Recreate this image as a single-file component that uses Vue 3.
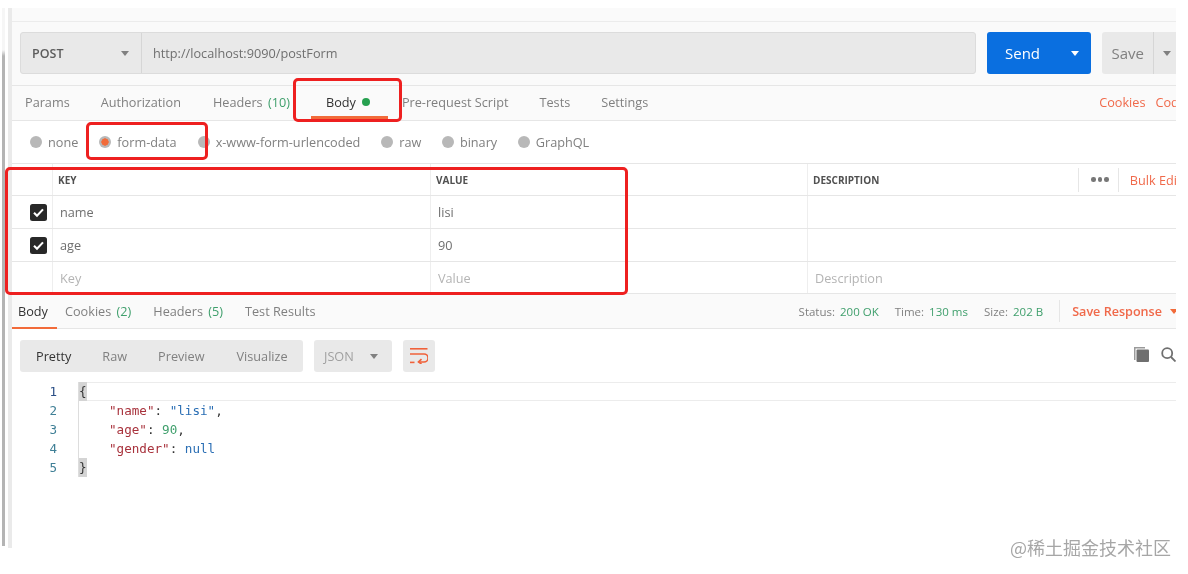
<script setup>
const bodyTypes = ['raw', 'binary', 'GraphQL']
const rows = [
  { k: 'name', v: 'lisi' },
  { k: 'age', v: '90' }
]
</script>

<template>
  <div class="page">
    <div class="strip"></div>
    <div class="app">
      <div class="topbar"></div>
      <div class="urlrow">
        <div class="urlbox">
          <div class="method"><span>POST</span><i class="caret"></i></div>
          <div class="url">http://localhost:9090/postForm</div>
        </div>
        <div class="send"><span>Send</span><i class="caret white"></i></div>
        <div class="save"><span>Save</span><div class="savecaret"><i class="caret"></i></div></div>
      </div>
      <div class="reqtabs">
        <span class="t1">Params</span>
        <span class="t2">Authorization</span>
        <span class="t3">Headers <em>(10)</em></span>
        <span class="t4">Body<b class="dot"></b></span>
        <span class="t5">Pre-request Script</span>
        <span class="t6">Tests</span>
        <span class="t7">Settings</span>
        <span class="links"><a>Cookies</a><a>Code</a></span>
      </div>
      <div class="radios">
        <span class="r r1"><i class="radio"></i>none</span>
        <span class="r r2"><i class="radio on"></i>form-data</span>
        <span class="r r3"><i class="radio"></i>x-www-form-urlencoded</span>
        <span class="r r4" v-for="b in bodyTypes" :key="b"><i class="radio"></i>{{ b }}</span>
      </div>
      <div class="table">
        <div class="tr th">
          <div class="c0"></div>
          <div class="c1">KEY</div>
          <div class="c2">VALUE</div>
          <div class="c3">
            <span>DESCRIPTION</span>
            <span class="tools">
              <span class="dots"><b></b><b></b><b></b></span>
              <a>Bulk Edit</a>
            </span>
          </div>
        </div>
        <div class="tr" v-for="r in rows" :key="r.k">
          <div class="c0">
            <svg class="check" viewBox="0 0 17 17" width="17" height="17">
              <rect width="17" height="17" rx="2.5" fill="#282828" />
              <path d="M4 8.8l3 3 6-6.4" fill="none" stroke="#fff" stroke-width="2.1" />
            </svg>
          </div>
          <div class="c1">{{ r.k }}</div>
          <div class="c2">{{ r.v }}</div>
          <div class="c3"></div>
        </div>
        <div class="tr ph last">
          <div class="c0"></div>
          <div class="c1">Key</div>
          <div class="c2">Value</div>
          <div class="c3">Description</div>
        </div>
      </div>
      <div class="restabs">
        <span class="rt active">Body</span>
        <span class="rt r-cookies">Cookies <em>(2)</em></span>
        <span class="rt r-headers">Headers <em>(5)</em></span>
        <span class="rt r-tests">Test Results</span>
        <span class="meta">
          <span>Status: <em>200 OK</em></span>
          <span>Time: <em>130 ms</em></span>
          <span>Size: <em>202 B</em></span>
          <span class="saveres">Save Response<i class="caret red"></i></span>
        </span>
      </div>
      <div class="toolbar">
        <div class="seg">
          <span class="cur">Pretty</span><span class="s-raw">Raw</span><span class="s-prev">Preview</span><span class="s-vis">Visualize</span>
        </div>
        <div class="json"><span>JSON</span><i class="caret"></i></div>
        <div class="wrap">
          <svg viewBox="0 0 18 16" width="18" height="16" fill="none" stroke="#f0613a" stroke-width="1.6">
            <path d="M0 .8h17.5" />
            <path d="M0 6h14a4 4 0 0 1 0 8H8.5" />
            <path d="M11.5 11.2L8.5 14l3 2" />
            <path d="M0 14.4h4.5" />
          </svg>
        </div>
        <div class="icons">
          <svg viewBox="0 0 15 15" width="15" height="15" fill="#6f6f6f">
            <path d="M0 0h11v1.5H1.5V13H0z" fill="#9a9a9a" />
            <rect x="2.5" y="2.5" width="12.5" height="12.5" rx="1" />
          </svg>
          <svg viewBox="0 0 15 15" width="15" height="15" fill="none" stroke="#6f6f6f" stroke-width="1.8">
            <circle cx="6.2" cy="6.2" r="5" />
            <path d="M10 10l4.5 4.5" />
          </svg>
        </div>
      </div>
      <div class="code">
        <div class="gutter"><div class="n1">1</div><div>2</div><div>3</div><div>4</div><div>5</div></div>
        <div class="lines">
          <div class="ln act"><span class="br">{</span></div>
          <div class="ln in"><span class="k">"name"</span>: <span class="s">"lisi"</span>,</div>
          <div class="ln in"><span class="k">"age"</span>: <span class="num">90</span>,</div>
          <div class="ln in"><span class="k">"gender"</span>: <span class="s">null</span></div>
          <div class="ln"><span class="br">}</span></div>
        </div>
      </div>
    </div>

    <div class="leftline"></div>
    <div class="mark m-body"></div>
    <div class="mark m-form"></div>
    <div class="mark m-table"></div>
    <div class="underline"></div>
    <div class="watermark">@稀土掘金技术社区</div>
  </div>
</template>

<style>
html, body { margin: 0; background: #fff; overflow: hidden; }
</style>

<style scoped>
.page {
  position: relative;
  width: 1188px;
  height: 574px;
  overflow: hidden;
  display: flex;
  background: #fff;
  font-family: "Open Sans", "Noto Sans", sans-serif;
  font-size: 12.7px;
  color: #808080;
  filter: blur(0.45px);
}
.strip {
  width: 3px;
  height: 538px;
  margin: 8px 0 0 2px;
  background: linear-gradient(#f6f6f6 0 42px, #b4b4b4 48px);
  flex: none;
}
.app {
  width: 1168px;
  height: 540px;
  margin: 8px 0 0 3px;
  box-sizing: border-box;
  overflow: hidden;
  flex: none;
}
.topbar { height: 13px; background: #fafafa; border-bottom: 1px solid #ececec; }
.urlrow {
  height: 64px;
  box-sizing: border-box;
  background: #fafafa;
  border-bottom: 1px solid #e6e6e6;
  display: flex;
  padding: 10px 0 0 12px;
}
.urlbox {
  width: 956px;
  height: 42px;
  box-sizing: border-box;
  background: #e9e9e9;
  border: 1px solid #dcdcdc;
  border-radius: 3px;
  display: flex;
  align-items: center;
  flex: none;
}
.method {
  width: 121px;
  height: 100%;
  border-right: 1px solid #d6d6d6;
  box-sizing: border-box;
  display: flex;
  align-items: center;
  justify-content: space-between;
  padding: 0 12px 0 11px;
  font-weight: 600;
  font-size: 12.5px;
  color: #5c5c5c;
}
.url { padding-left: 11px; font-size: 12.7px; color: #6f6f6f; }
.caret {
  display: inline-block;
  width: 0;
  height: 0;
  border-left: 4px solid transparent;
  border-right: 4px solid transparent;
  border-top: 5px solid #808080;
}
.caret.white { border-top-color: #fff; }
.caret.red { border-top-color: #f26b3a; margin-left: 8px; }
.send {
  width: 104px;
  height: 42px;
  margin-left: 11px;
  background: #0a6fe0;
  border-radius: 3px;
  color: #fff;
  font-size: 15px;
  font-weight: 500;
  display: flex;
  align-items: center;
  justify-content: space-between;
  box-sizing: border-box;
  padding: 0 12px 0 18px;
  flex: none;
}
.save {
  width: 80px;
  height: 42px;
  margin-left: 11px;
  background: #e9e9e9;
  border-radius: 3px 0 0 3px;
  color: #808080;
  font-size: 15px;
  font-weight: 500;
  display: flex;
  align-items: center;
  padding-left: 9.5px;
  box-sizing: border-box;
  flex: none;
}
.savecaret {
  margin-left: 9px;
  height: 100%;
  border-left: 1px solid #d6d6d6;
  padding-left: 9px;
  display: flex;
  align-items: center;
}
.reqtabs {
  height: 35px;
  box-sizing: border-box;
  padding-bottom: 2px;
  background: #fafafa;
  border-bottom: 1px solid #e6e6e6;
  display: flex;
  align-items: center;
  white-space: nowrap;
}
.reqtabs em, .rt em { color: #3f9f6c; font-style: normal; margin-left: 2px; }
.t1 { margin-left: 17px; }
.t2 { margin-left: 31px; }
.t3 { margin-left: 32px; }
.t4 { margin-left: 36px; color: #333; display: flex; align-items: center; }
.t5 { margin-left: 32px; }
.t6 { margin-left: 31px; }
.t7 { margin-left: 31px; }
.dot { width: 8px; height: 8px; border-radius: 50%; background: #26a04f; margin-left: 6px; }
.links { margin-left: auto; color: #f0694a; display: flex; gap: 10px; margin-right: -10px; }
.radios {
  height: 42px;
  box-sizing: border-box;
  display: flex;
  align-items: center;
  padding-left: 22px;
  white-space: nowrap;
}
.r { display: inline-flex; align-items: center; }
.radio {
  width: 12px;
  height: 12px;
  border-radius: 50%;
  background: #b8b8b8;
  margin-right: 6px;
  box-sizing: border-box;
}
.radio.on { background: radial-gradient(circle, #f26b3a 0 3.4px, #b8b8b8 3.9px); }
.r1 { margin-right: 8px; }
.r2 { margin-right: 21px; margin-left: 13px; }
.r3 { margin-right: 21px; }
.r4 { margin-right: 20.5px; }
.table { border-top: 1px solid #e6e6e6; }
.tr {
  display: flex;
  height: 33px;
  box-sizing: border-box;
  border-bottom: 1px solid #e6e6e6;
  align-items: stretch;
  color: #6f6f6f;
}
.tr.th { height: 32px; }
.tr.last { height: 32px; }
.tr > div { display: flex; align-items: center; box-sizing: border-box; }
.c0 { width: 44px; flex: none; justify-content: flex-end; padding-right: 5px; }
.c1 { width: 378px; flex: none; border-left: 1px solid #eee; padding-left: 7px; }
.c2 { width: 377px; flex: none; border-left: 1px solid #eee; padding-left: 7px; }
.c3 { flex: 1; min-width: 0; border-left: 1px solid #eee; padding-left: 7px; white-space: nowrap; }
.th { font-size: 10px; font-weight: 700; color: #505050; }
.th .c1, .th .c2, .th .c3 { padding-left: 5px; }
.tools { display: inline-flex; align-items: center; margin-left: 199px; height: 24px; font-weight: 400; flex: none; }
.dots {
  border-left: 1px solid #e6e6e6;
  border-right: 1px solid #e6e6e6;
  padding: 0 9px 0 12px;
  height: 24px;
  display: inline-flex;
  align-items: center;
  gap: 2px;
}
.dots b { width: 4.5px; height: 4.5px; border-radius: 50%; background: #777; }
.tools a { color: #f0694a; font-size: 12.7px; margin-left: 11px; }
.ph { color: #b4b4b4; }
.restabs {
  height: 35px;
  box-sizing: border-box;
  background: #fafafa;
  border-bottom: 1px solid #e6e6e6;
  display: flex;
  align-items: stretch;
  white-space: nowrap;
}
.rt { display: flex; align-items: center; white-space: pre; }
.rt.active {
  color: #333;
  margin-left: 1px;
  padding: 0 9px;
  border-bottom: 2px solid #f26b3a;
  margin-bottom: -1px;
}
.r-cookies { margin-left: 8px; }
.r-headers { margin-left: 22px; }
.r-tests { margin-left: 22px; }
.meta { margin-left: auto; display: flex; align-items: center; font-size: 11.5px; gap: 16px; }
.meta em { color: #3f9f6c; font-style: normal; margin-left: 2px; }
.saveres { color: #f0694a; font-size: 12.6px; font-weight: 600; border-left: 1px solid #e6e6e6; padding-left: 12px; height: 22px; display: flex; align-items: center; margin-right: -2px; }
.toolbar {
  height: 54px;
  box-sizing: border-box;
  display: flex;
  align-items: flex-start;
  padding: 11px 0 0 12px;
}
.seg {
  height: 32px;
  width: 283px;
  background: #e9e9e9;
  border-radius: 3px;
  display: flex;
  align-items: center;
  box-sizing: border-box;
  padding-left: 16px;
  flex: none;
}
.s-raw { margin-left: 31px; }
.s-prev { margin-left: 31px; }
.s-vis { margin-left: 32px; }
.cur { color: #333; }
.json {
  width: 78px;
  height: 32px;
  margin-left: 11px;
  background: #e9e9e9;
  border-radius: 3px;
  display: flex;
  align-items: center;
  justify-content: space-between;
  box-sizing: border-box;
  padding: 0 14px 0 10px;
  color: #a0a0a0;
  flex: none;
}
.wrap {
  width: 32px;
  height: 32px;
  margin-left: 11px;
  background: #e9e9e9;
  border-radius: 3px;
  display: flex;
  align-items: center;
  justify-content: center;
  flex: none;
}
.icons { margin-left: auto; display: flex; gap: 12px; margin-top: 7px; margin-right: 0; }
.code {
  display: flex;
  font-family: "DejaVu Sans Mono", "Liberation Mono", monospace;
  font-size: 12.6px;
  line-height: 19px;
  color: #333;
  margin-top: -1px;
}
.gutter { width: 49px; text-align: right; color: #3f7f96; flex: none; }
.n1 { color: #2b4f86; }
.lines { flex: 1; margin-left: 21px; border-left: 1px solid #ddd; white-space: pre; }
.ln { height: 19px; }
.ln.in { padding-left: 30px; }
.ln.act { box-shadow: inset 0 1px #ececec, inset 0 -1px #ececec; }
.br { background: #d4d4d4; display: inline-block; height: 100%; }
.k { color: #a8323c; }
.s { color: #2a6eb4; }
.num { color: #3f9f6c; }
.leftline { position: absolute; left: 8px; top: 8px; width: 4px; height: 540px; background: #eaeaea; }
.mark {
  position: absolute;
  border: 3px solid #ee2020;
  border-radius: 5px;
  box-sizing: border-box;
  pointer-events: none;
}
.m-body { left: 293px; top: 78px; width: 109px; height: 44px; }
.m-form { left: 86px; top: 122px; width: 122px; height: 38px; }
.m-table { left: 5px; top: 167px; width: 623px; height: 128px; }
.underline { position: absolute; left: 311px; top: 116px; width: 77px; height: 3px; background: #f26b3a; }
.watermark {
  position: absolute;
  left: 1010px;
  top: 535px;
  font-family: "Noto Sans CJK SC", "Noto Sans", sans-serif;
  font-size: 18px;
  line-height: 24px;
  color: #a6a6a6;
  white-space: nowrap;
}
</style>
